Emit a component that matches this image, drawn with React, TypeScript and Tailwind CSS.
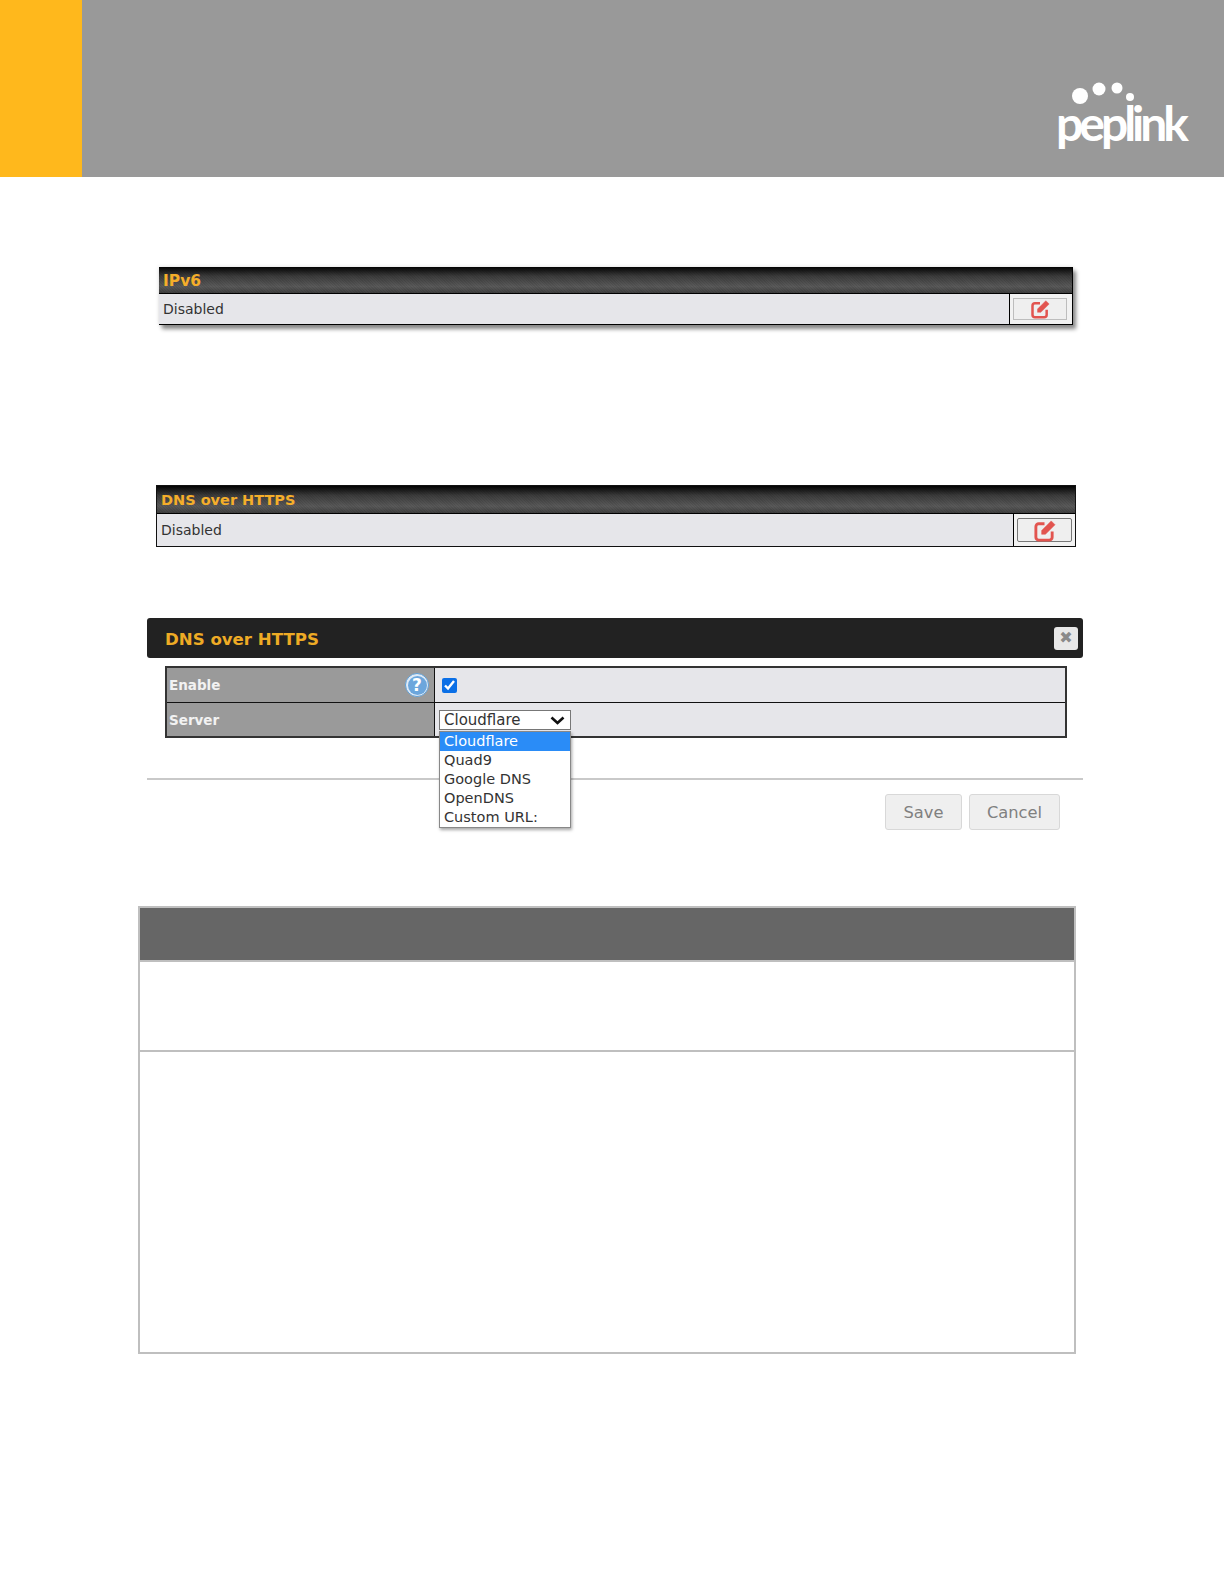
const options = ['Cloudflare', 'Quad9', 'Google DNS', 'OpenDNS', 'Custom URL:'];

function PeplinkLogo() {
  return (
    <div className="relative h-[70px] w-[134px] text-white">
      <svg className="absolute left-0 top-0" width="134" height="32" viewBox="0 0 134 32" fill="#fff">
        <circle cx="24" cy="15" r="8" />
        <circle cx="43" cy="8" r="6.5" />
        <circle cx="61" cy="7" r="5.5" />
        <circle cx="74" cy="16" r="4" />
      </svg>
      <span className="absolute bottom-0 left-0 font-['Lato',sans-serif] text-[48px] leading-[56px] font-bold tracking-[-4px]">
        peplink
      </span>
    </div>
  );
}

function EditIcon({ size }: { size: number }) {
  return (
    <svg width={size} height={size} viewBox="0 0 24 24" fill="none" stroke="#e2544f">
      <path d="M12 5H6a3 3 0 0 0-3 3v11a3 3 0 0 0 3 3h11a3 3 0 0 0 3-3v-6" strokeWidth="3" />
      <path d="M9 12 19 2l4 4-10 10H9z" fill="#e2544f" strokeWidth="0.5" />
    </svg>
  );
}

function SettingBar({ title, titleClass, className, buttonClass, iconSize }: { title: string; titleClass: string; className: string; buttonClass: string; iconSize: number }) {
  return (
    <div className={className}>
      <div className={`flex items-center bg-[repeating-linear-gradient(45deg,rgba(0,0,0,0.08)_0_1px,transparent_1px_2px),linear-gradient(#030303,#3c3c3c_35%,#5a5a5a_75%,#404040)] pl-[4px] pt-[3px] font-bold text-[#f5ae2a] ${titleClass}`}>{title}</div>
      <div className="flex flex-1 border-t-[1px] border-black bg-[#e6e6ea]">
        <div className="flex flex-1 items-center pl-[4px] text-[14px] text-[#333]">Disabled</div>
        <div className="flex flex-none items-center justify-center border-l border-black bg-[#f2f2f2]">
          <div className={`flex items-center justify-center border bg-[#efefef] ${buttonClass}`}>
            <EditIcon size={iconSize} />
          </div>
        </div>
      </div>
    </div>
  );
}

function DnsDialog() {
  return (
    <div className="ml-[147px] mt-[71px] w-[936px]">
      <div className="flex h-[40px] items-center justify-between rounded-[3px] bg-[#222] pl-[18px] pr-[5px] text-[16.6px] font-bold text-[#eeab25]">
        <span className="pt-[4px]">DNS over HTTPS</span>
        <div className="flex h-[23px] w-[24px] items-center justify-center rounded-[3px] bg-[#e8e8e8] text-[16px] font-bold text-[#8a8a8a]">✖</div>
      </div>

      <div className="relative ml-[18px] mt-[8px] w-[902px] border-2 border-[#333]">
        <div className="flex h-[35px] border-b-[1.5px] border-[#111]">
          <div className="flex w-[268px] items-center justify-between border-r-[1.5px] border-[#111] bg-[#9a9a9a] pl-[2px] pr-[5px] text-[13.5px] font-bold text-[#f2f2f2]">
            Enable
            <div className="flex h-[24px] w-[24px] items-center justify-center rounded-full border-[1.5px] border-[#5f9fd6] bg-[#dfeaf5]">
              <div className="flex h-[19px] w-[19px] items-center justify-center rounded-full bg-[#6ca6dc] text-[17px] leading-none font-bold text-white">?</div>
            </div>
          </div>
          <div className="flex flex-1 items-center bg-[#e6e6ea] pl-[7px]">
            <input type="checkbox" checked readOnly className="h-[15px] w-[15px] accent-[#0b6fe6]" />
          </div>
        </div>
        <div className="flex h-[33px]">
          <div className="flex w-[268px] items-center border-r-[1.5px] border-[#111] bg-[#9a9a9a] pl-[2px] pt-[2px] text-[13.5px] font-bold text-[#f2f2f2]">Server</div>
          <div className="flex flex-1 items-center bg-[#e6e6ea] pl-[4px] pt-[1px]">
            <div className="flex h-[20px] w-[132px] items-center justify-between border border-[#777] bg-white pl-[4px] pr-[5px] text-[15px] text-[#333]">
              Cloudflare
              <svg width="15" height="9" viewBox="0 0 15 9" fill="none" stroke="#111" strokeWidth="2.6">
                <path d="M1.5 1.5 7.5 7 13.5 1.5" />
              </svg>
            </div>
          </div>
        </div>

        <div className="absolute left-[272px] top-[63px] z-10 w-[132px] border border-[#888] bg-white text-[14.5px] text-[#333] shadow-[1px_2px_3px_rgba(0,0,0,0.35)]">
          {options.map((o, i) => (
            <div key={o} className={i === 0 ? 'flex h-[19px] items-center bg-[#2a8cf7] pl-[4px] text-white' : 'flex h-[19px] items-center pl-[4px]'}>
              {o}
            </div>
          ))}
        </div>
      </div>

      <div className="mt-[40px] flex justify-end gap-[7px] border-t-[2px] border-[#c9c9c9] pr-[23px] pt-[14px]">
        <div className="flex h-[36px] w-[77px] items-center justify-center rounded-[3px] border border-[#d8d8d8] bg-[#efefef] pt-[3px] text-[16.3px] text-[#808080]">Save</div>
        <div className="flex h-[36px] w-[91px] items-center justify-center rounded-[3px] border border-[#d8d8d8] bg-[#efefef] pt-[3px] text-[16.3px] text-[#808080]">Cancel</div>
      </div>
    </div>
  );
}

export default function App() {
  return (
    <div className="h-[1584px] w-[1224px] overflow-hidden bg-white font-['DejaVu_Sans',sans-serif]">
      <div className="flex h-[177px] bg-[#999999]">
        <div className="w-[82px] bg-[#ffb81c]" />
        <div className="flex flex-1 items-end justify-end pb-[26px] pr-[34px]">
          <PeplinkLogo />
        </div>
      </div>

      <SettingBar
        title="IPv6"
        titleClass="h-[26px] text-[15.5px]"
        className="ml-[159px] mt-[90px] flex h-[58px] w-[914px] flex-col border-b border-r border-black shadow-[3px_4px_4px_#888,0_0_4px_#ddd]"
        buttonClass="ml-[3px] mr-[5px] my-[4px] h-[22px] w-[54px] border-[#bdbdbd]"
        iconSize={20}
      />

      <SettingBar
        title="DNS over HTTPS"
        titleClass="h-[28px] text-[14.5px]"
        className="ml-[156px] mt-[160px] flex h-[62px] w-[920px] flex-col border border-[#111]"
        buttonClass="mx-[3px] my-[4px] h-[24px] w-[55px] rounded-[2px] border-[#777]"
        iconSize={23}
      />

      <DnsDialog />

      <div className="ml-[138px] mt-[76px] h-[448px] w-[938px] border-2 border-[#bfbfbf]">
        <div className="h-[54px] border-b-2 border-[#bfbfbf] bg-[#666666]" />
        <div className="h-[90px] border-b-2 border-[#bfbfbf]" />
      </div>
    </div>
  );
}
